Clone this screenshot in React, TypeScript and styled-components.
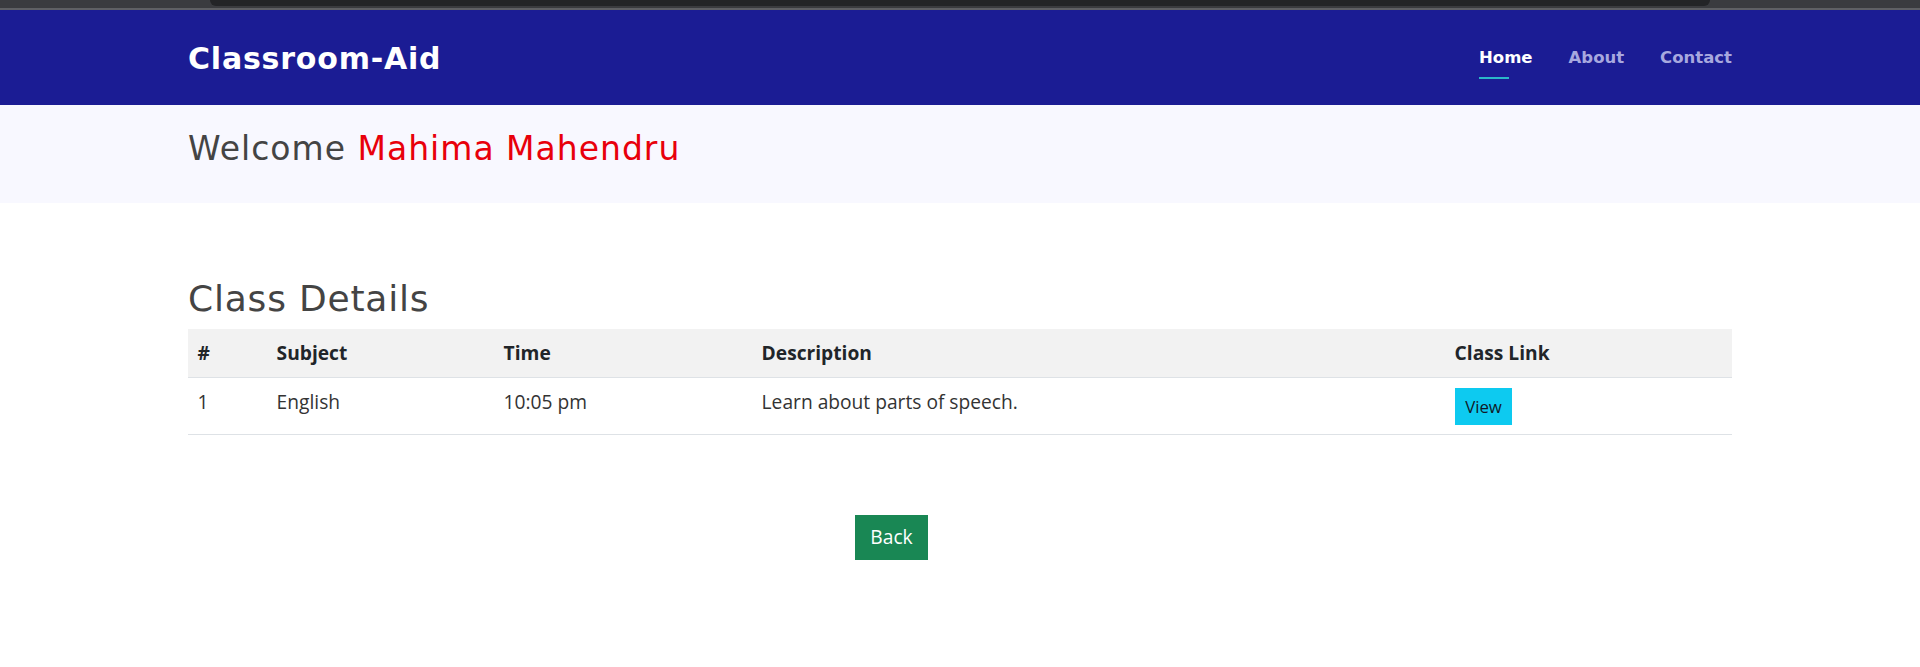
import styled, { createGlobalStyle } from 'styled-components';

const GlobalStyle = createGlobalStyle`
  html, body {
    margin: 0;
    padding: 0;
    background: #ffffff;
    font-family: 'Open Sans', 'Liberation Sans', sans-serif;
  }
  * {
    box-sizing: border-box;
  }
`;

const classes = [
  {
    id: 1,
    subject: 'English',
    time: '10:05 pm',
    description: 'Learn about parts of speech.',
  },
];

const columns = [
  { label: '#', width: 79 },
  { label: 'Subject', width: 227 },
  { label: 'Time', width: 258 },
  { label: 'Description', width: 693 },
  { label: 'Class Link', width: 287 },
];

export default function App() {
  return (
    <>
      <GlobalStyle />
      <BrowserStrip>
        <BrowserTab />
      </BrowserStrip>
      <StripEdge />

      <Navbar>
        <Container>
          <Brand>Classroom-Aid</Brand>
          <NavList>
            <NavLink active>Home</NavLink>
            <NavLink>About</NavLink>
            <NavLink>Contact</NavLink>
          </NavList>
        </Container>
      </Navbar>

      <WelcomeBand>
        <Container>
          <WelcomeTitle>
            Welcome <UserName>Mahima Mahendru</UserName>
          </WelcomeTitle>
        </Container>
      </WelcomeBand>

      <Main>
        <Container column>
          <SectionTitle>Class Details</SectionTitle>
          <Table>
            <colgroup>
              {columns.map((c) => (
                <col key={c.label} style={{ width: c.width }} />
              ))}
            </colgroup>
            <thead>
              <HeadRow>
                {columns.map((c) => (
                  <Th key={c.label}>{c.label}</Th>
                ))}
              </HeadRow>
            </thead>
            <tbody>
              {classes.map((item) => (
                <tr key={item.id}>
                  <Td>{item.id}</Td>
                  <Td>{item.subject}</Td>
                  <Td>{item.time}</Td>
                  <Td>{item.description}</Td>
                  <Td>
                    <ViewButton>View</ViewButton>
                  </Td>
                </tr>
              ))}
            </tbody>
          </Table>
          <BackRow>
            <BackButton>Back</BackButton>
          </BackRow>
        </Container>
      </Main>
    </>
  );
}

const BrowserStrip = styled.div`
  height: 8px;
  background: #3a3b3f;
  display: flex;
`;

const BrowserTab = styled.div`
  margin-left: 210px;
  width: 1500px;
  height: 6px;
  background: #232427;
  border-radius: 0 0 10px 10px;
`;

const StripEdge = styled.div`
  height: 2px;
  background: #5f6064;
`;

const Container = styled.div<{ column?: boolean }>`
  width: 1544px;
  margin: 0 auto;
  display: flex;
  flex-direction: ${(p) => (p.column ? 'column' : 'row')};
  align-items: ${(p) => (p.column ? 'stretch' : 'center')};
  justify-content: space-between;
`;

const Navbar = styled.header`
  height: 95px;
  background: #1b1c94;
  display: flex;
  align-items: center;
`;

const Brand = styled.div`
  font-family: 'DejaVu Sans', 'Liberation Sans', sans-serif;
  font-weight: 700;
  font-size: 30px;
  letter-spacing: 0.8px;
  color: #ffffff;
  padding-top: 2px;
`;

const NavList = styled.nav`
  display: flex;
  gap: 36px;
  align-items: center;
`;

const NavLink = styled.a<{ active?: boolean }>`
  position: relative;
  font-family: 'DejaVu Sans', 'Liberation Sans', sans-serif;
  font-weight: 700;
  font-size: 16.5px;
  color: ${(p) => (p.active ? '#ffffff' : '#a7a8df')};
  cursor: pointer;
  padding: 4px 0;

  &::after {
    content: '';
    display: ${(p) => (p.active ? 'block' : 'none')};
    position: absolute;
    left: 0;
    bottom: -8px;
    width: 30px;
    height: 2px;
    background: #2bb7c9;
  }
`;

const WelcomeBand = styled.section`
  height: 98px;
  background: #f8f8ff;
  padding-top: 24px;
`;

const WelcomeTitle = styled.h2`
  margin: 0;
  font-family: 'DejaVu Sans', 'Liberation Sans', sans-serif;
  font-weight: 400;
  font-size: 33px;
  line-height: 1.2;
  letter-spacing: 1px;
  color: #444444;
`;

const UserName = styled.span`
  color: #e8000b;
`;

const Main = styled.main`
  padding-top: 74px;
`;

const SectionTitle = styled.h2`
  margin: 0 0 9px;
  font-family: 'DejaVu Sans', 'Liberation Sans', sans-serif;
  font-weight: 400;
  font-size: 36px;
  line-height: 1.2;
  letter-spacing: 0.8px;
  color: #444444;
`;

const Table = styled.table`
  width: 100%;
  border-collapse: collapse;
  table-layout: fixed;
  font-size: 19.2px;
  line-height: 28.8px;
`;

const HeadRow = styled.tr`
  background: #f2f2f2;
`;

const Th = styled.th`
  text-align: left;
  font-weight: 700;
  color: #212529;
  padding: 9.6px;
  border-bottom: 1px solid #dee2e6;
`;

const Td = styled.td`
  text-align: left;
  vertical-align: top;
  color: #333333;
  padding: 9.6px;
  border-bottom: 1px solid #dee2e6;
`;

const ViewButton = styled.button`
  font-family: 'Open Sans', 'Liberation Sans', sans-serif;
  font-size: 16.8px;
  line-height: 25.2px;
  padding: 4.8px 9.6px;
  background: #0dcaf0;
  border: 1.2px solid #0dcaf0;
  color: #111827;
  border-radius: 0;
  cursor: pointer;
`;

const BackRow = styled.div`
  max-width: 1407px;
  display: flex;
  justify-content: center;
  margin-top: 80px;
`;

const BackButton = styled.button`
  font-family: 'Open Sans', 'Liberation Sans', sans-serif;
  font-size: 19.2px;
  line-height: 28.8px;
  padding: 7.2px 14.4px;
  background: #198754;
  border: 1.2px solid #198754;
  color: #ffffff;
  border-radius: 0;
  cursor: pointer;
`;
